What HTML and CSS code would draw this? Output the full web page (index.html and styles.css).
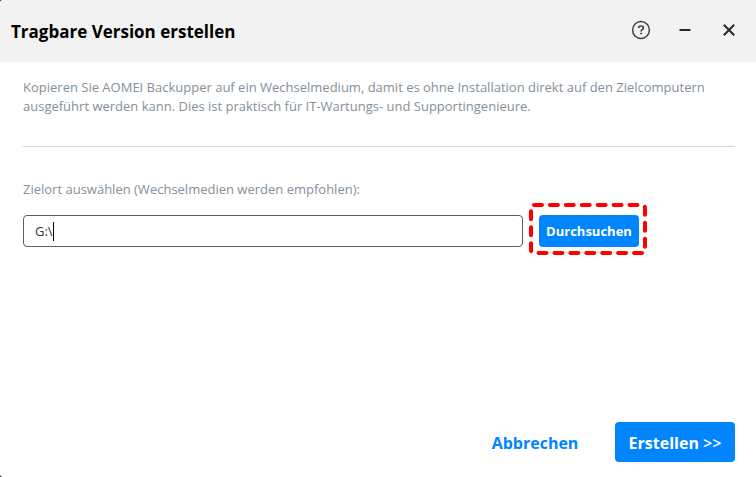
FILE: index.html
```html
<!DOCTYPE html>
<html lang="de">
<head>
    <meta charset="UTF-8">
    <meta name="viewport" content="width=device-width, initial-scale=1.0">
    <title>Tragbare Version erstellen</title>
    <link rel="stylesheet" href="styles.css">
</head>
<body>
    <div class="window">
        <header class="title-bar">
            <h1>Tragbare Version erstellen</h1>
            <div class="window-buttons">
                <button type="button" class="icon-button" aria-label="Hilfe">
                    <svg width="20" height="20" viewBox="0 0 20 20" fill="none" stroke="#3d4247">
                        <circle cx="10" cy="10" r="8.4" stroke-width="1.5"/>
                        <path d="M7.600 8.100C7.600 6.700 8.600 6 10 6s2.400.7 2.400 2c0 1.700-2.300 1.700-2.300 3.500" stroke-width="1.700"/>
                        <path d="M9.200 13.500h1.800" stroke-width="1.700"/>
                    </svg>
                </button>
                <button type="button" class="icon-button" aria-label="Minimieren">
                    <svg width="20" height="20" viewBox="0 0 20 20" stroke="#24292e" stroke-width="2">
                        <path d="M4.500 10h11"/>
                    </svg>
                </button>
                <button type="button" class="icon-button" aria-label="Schließen">
                    <svg width="20" height="20" viewBox="0 0 20 20" stroke="#24292e" stroke-width="2">
                        <path d="M4.800 4.800l10.400 10.400M15.200 4.800L4.800 15.200"/>
                    </svg>
                </button>
            </div>
        </header>

        <main class="content">
            <p class="description">Kopieren Sie AOMEI Backupper auf ein Wechselmedium, damit es ohne Installation direkt auf den Zielcomputern ausgeführt werden kann. Dies ist praktisch für IT-Wartungs- und Supportingenieure.</p>

            <label class="target-label" for="target">Zielort auswählen (Wechselmedien werden empfohlen):</label>
            <div class="target-row">
                <div class="target-field">
                    <input type="text" id="target" value="G:\">
                    <span class="caret"></span>
                </div>
                <div class="browse">
                    <button type="button" class="button browse-button">Durchsuchen</button>
                    <svg class="highlight" width="118" height="52" viewBox="0 0 118 52" aria-hidden="true">
                        <rect x="2" y="2" width="114" height="48" rx="3" pathLength="320"/>
                    </svg>
                </div>
            </div>
        </main>

        <footer class="actions">
            <button type="button" class="button cancel-button">Abbrechen</button>
            <button type="button" class="button create-button">Erstellen <span class="arrows">&gt;&gt;</span></button>
        </footer>
    </div>
</body>
</html>
```

FILE: styles.css
```css
:root {
    --accent: #0085ff;
    --muted: #84909a;
    --bar-bg: #f2f2f2;
}

* {
    box-sizing: border-box;
}

body {
    margin: 0;
    background-color: #14204a;
    font-family: 'Open Sans', 'Noto Sans', sans-serif;
}

.window {
    display: flex;
    flex-direction: column;
    min-height: 100vh;
    background-color: #fff;
    border-radius: 3px 0 0 3px;
    overflow: hidden;
}

.title-bar {
    display: flex;
    justify-content: space-between;
    align-items: flex-start;
    height: 62px;
    padding: 20px 17px 0 11px;
    background-color: var(--bar-bg);
}

.title-bar h1 {
    margin: 0;
    font-size: 17px;
    line-height: 24px;
    font-weight: bold;
    color: #000;
}

.window-buttons {
    display: flex;
    gap: 24px;
}

.icon-button {
    display: flex;
    padding: 0;
    border: none;
    background: none;
    cursor: pointer;
}

.content {
    flex: 1;
    padding: 16px 21px 0 23px;
}

.description {
    margin: 0 0 32px;
    padding-bottom: 30px;
    border-bottom: 1px solid #d5d8d8;
    font-size: 13px;
    line-height: 19px;
    color: var(--muted);
}

.target-label {
    display: block;
    margin-bottom: 16px;
    font-size: 13px;
    line-height: 20px;
    color: var(--muted);
}

.target-row {
    display: flex;
    gap: 16px;
}

.target-field {
    position: relative;
    flex: 0 1 500px;
}

.target-field input {
    width: 100%;
    height: 32px;
    padding: 0 11px;
    border: 1px solid #5a5f64;
    border-radius: 4px;
    outline: none;
    font-family: inherit;
    font-size: 13px;
    color: #333;
}

.caret {
    position: absolute;
    top: 7px;
    left: 30px;
    width: 1px;
    height: 19px;
    background-color: #000;
}

.browse {
    position: relative;
    flex: none;
}

.highlight {
    position: absolute;
    top: -12px;
    left: -10px;
    fill: none;
    stroke: #f00;
    stroke-width: 4;
    stroke-linecap: round;
    stroke-dasharray: 8 8;
    pointer-events: none;
}

.button {
    padding: 0;
    border: none;
    border-radius: 4px;
    font-family: inherit;
    font-weight: bold;
    cursor: pointer;
}

.browse-button {
    width: 100px;
    height: 32px;
    background-color: var(--accent);
    color: #fff;
    font-size: 13px;
}

.actions {
    display: flex;
    justify-content: flex-end;
    gap: 20px;
    padding: 0 21px 15px;
}

.cancel-button,
.create-button {
    width: 120px;
    height: 40px;
    padding-top: 2px;
    font-size: 16px;
}

.cancel-button {
    background: none;
    color: var(--accent);
}

.create-button {
    background-color: var(--accent);
    color: #fff;
}

.arrows {
    font-weight: 600;
}
```
